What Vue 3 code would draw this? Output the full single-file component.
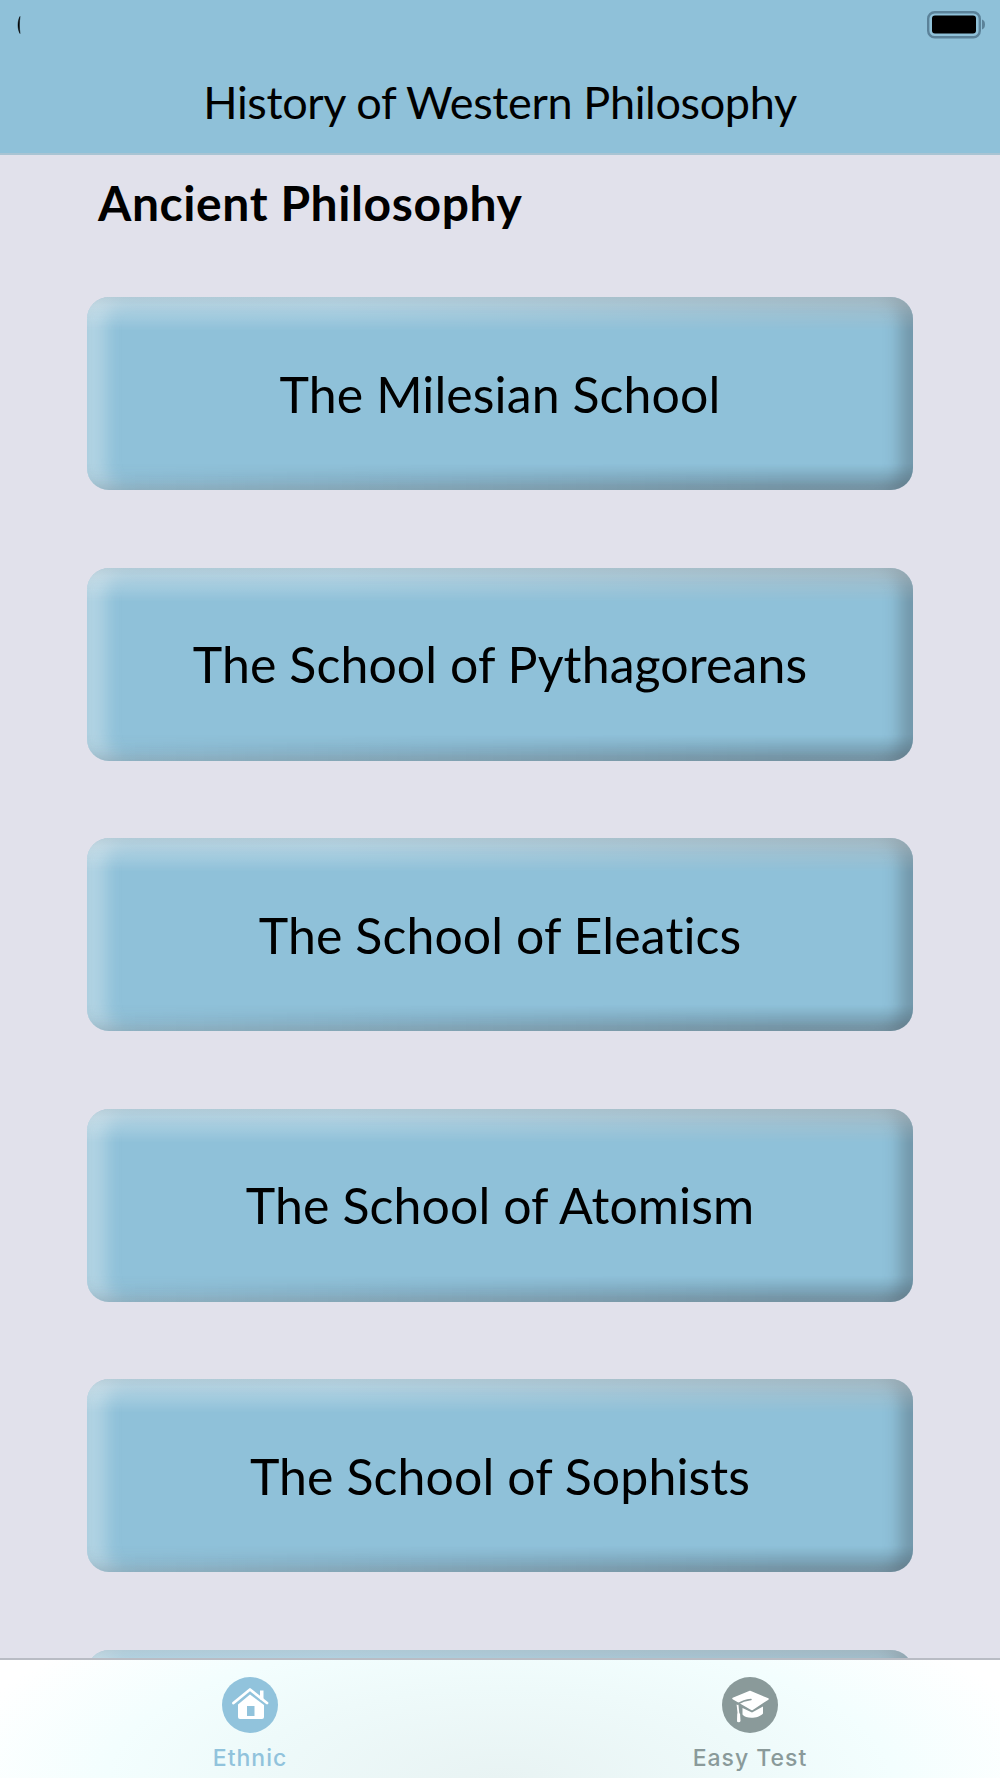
<template>
  <div class="screen">
    <header class="nav">
      <div class="status">
        <svg class="crescent" width="6" height="20" viewBox="0 0 6 20">
          <path d="M4 1.5C1.4 6 1.4 14 4 18.5C3.2 13 3.2 7 4 1.5Z" fill="#000" stroke="#000" stroke-width="0.5" />
        </svg>
        <svg class="battery" width="60" height="28" viewBox="0 0 60 28">
          <rect x="1.2" y="1.2" width="51.6" height="25" rx="6.5" fill="none" stroke="#5b8299" stroke-width="2.4" />
          <rect x="5" y="4.500" width="44" height="18" rx="3" fill="#000" />
          <path d="M55 8.500C59 9.500 59 17.500 55 18.500Z" fill="#5b8299" />
        </svg>
      </div>
      <h1 class="nav-title">History of Western Philosophy</h1>
    </header>

    <main class="content">
      <h2 class="section-title">Ancient Philosophy</h2>
      <div class="school-list">
        <button v-for="(school, i) in schools" :key="i" class="school-button">{{ school }}</button>
      </div>
    </main>

    <nav class="tabs">
      <div class="tab tab-active">
        <span class="tab-icon">
          <svg width="56" height="56" viewBox="0 0 56 56">
            <rect x="38" y="13.500" width="3.500" height="9" fill="#fff" />
            <path d="M11.500 26L28 12.500L45 26" fill="none" stroke="#fff" stroke-width="2.800" stroke-linecap="round" stroke-linejoin="round" />
            <path fill="#fff" d="M16 27.500L28 17.500L42 28V40A2 2 0 0 1 40 42H18A2 2 0 0 1 16 40Z" />
            <rect x="25" y="29" width="7.500" height="10" fill="#91c3dc" />
          </svg>
        </span>
        <span class="tab-label">Ethnic</span>
      </div>
      <div class="tab tab-muted">
        <span class="tab-icon">
          <svg width="56" height="56" viewBox="0 0 56 56">
            <path d="M11 21.500L28 14.500L46 22L30 32.500Z" fill="#fff" stroke="#fff" stroke-width="1.500" stroke-linejoin="round" />
            <path d="M15.500 27.500L16.500 37" stroke="#fff" stroke-width="1.800" fill="none" />
            <path d="M15.200 36.500H18L18.500 44A2 2 0 0 1 15 44.500Z" fill="#fff" />
            <path d="M20.500 31L30 35.500L41 29.500V36.500C37 41.500 24 42.500 20.500 37.500Z" fill="#fff" />
            <path d="M15.500 27C19.500 24.500 24 23 29 22.500" fill="none" stroke="#8a9a9a" stroke-width="1.500" stroke-linecap="round" />
          </svg>
        </span>
        <span class="tab-label">Easy Test</span>
      </div>
    </nav>
  </div>
</template>

<script setup>
const schools = [
  'The Milesian School',
  'The School of Pythagoreans',
  'The School of Eleatics',
  'The School of Atomism',
  'The School of Sophists',
  '',
];
</script>

<style>
html,
body {
  margin: 0;
  background: #e1e1eb;
}
</style>

<style scoped>
.screen {
  width: 1000px;
  height: 1778px;
  display: flex;
  flex-direction: column;
  overflow: hidden;
  background: #e1e1eb;
  font-family: Lato, "Liberation Sans", sans-serif;
  color: #000;
}

.nav {
  height: 155px;
  flex: none;
  box-sizing: border-box;
  background: #8fc1d9;
  border-bottom: 2px solid #a9c4d3;
  display: flex;
  flex-direction: column;
}

.status {
  height: 50px;
  padding: 11px 13px 0 16px;
  box-sizing: border-box;
  display: flex;
  justify-content: space-between;
  align-items: flex-start;
}

.crescent {
  margin-top: 4px;
}

.nav-title {
  margin: 25px 0 0;
  text-align: center;
  font-size: 45px;
  line-height: 54px;
  font-weight: 400;
  letter-spacing: -0.35px;
}

.content {
  flex: 1;
  min-height: 0;
  overflow: hidden;
  padding: 0 87px;
}

.section-title {
  margin: 23px 0 0 11px;
  font-size: 48px;
  line-height: 50px;
  font-weight: 700;
  letter-spacing: 0.6px;
}

.school-list {
  margin-top: 69px;
  display: flex;
  flex-direction: column;
  gap: 77.6px;
}

.school-button {
  flex: none;
  position: relative;
  overflow: hidden;
  height: 193px;
  border: none;
  border-radius: 22px;
  padding: 0;
  background: #8fc1d9;
  font-family: inherit;
  font-size: 50px;
  letter-spacing: 0.1px;
  color: #000;
  box-shadow:
    inset -13px 0 16px rgba(60, 70, 80, 0.34),
    inset 19px 0 16px rgba(225, 235, 240, 0.42);
}

/* top and bottom bevels shift in tone from left to right */
.school-button::before,
.school-button::after {
  content: "";
  position: absolute;
  left: 0;
  right: 0;
}

.school-button::before {
  top: 0;
  height: 34px;
  background: linear-gradient(to right, rgba(225, 235, 240, 0.42) 30%, rgba(185, 185, 185, 0.42));
  -webkit-mask-image: linear-gradient(to bottom, #000 25%, transparent);
  mask-image: linear-gradient(to bottom, #000 25%, transparent);
}

.school-button::after {
  bottom: 0;
  height: 26px;
  background: linear-gradient(to right, rgba(150, 165, 175, 0.1), rgba(60, 70, 80, 0.3) 85%);
  -webkit-mask-image: linear-gradient(to top, #000 20%, transparent);
  mask-image: linear-gradient(to top, #000 20%, transparent);
}

.tabs {
  height: 120px;
  flex: none;
  box-sizing: border-box;
  border-top: 2px solid #b9bcc4;
  margin-top: -2px;
  position: relative;
  display: grid;
  grid-template-columns: 1fr 1fr;
  background: radial-gradient(ellipse 560px 200px at 50% 100%, #e8f3f3 0%, #eefafa 45%, #f3fefe 70%, #ffffff 100%);
}

.tab {
  display: flex;
  flex-direction: column;
  align-items: center;
  padding-top: 17px;
}

.tab-icon {
  width: 56px;
  height: 56px;
  border-radius: 50%;
  display: block;
}

.tab-icon svg {
  display: block;
}

.tab-active .tab-icon {
  background: #91c3dc;
}

.tab-muted .tab-icon {
  background: #8a9a9a;
}

.tab-label {
  margin-top: 11px;
  font-family: Inter, Roboto, sans-serif;
  font-size: 23px;
  line-height: 28px;
  font-weight: 500;
  letter-spacing: 1px;
}

.tab-active .tab-label {
  color: #91c3dc;
}

.tab-muted .tab-label {
  color: #8a9a9a;
}
</style>
